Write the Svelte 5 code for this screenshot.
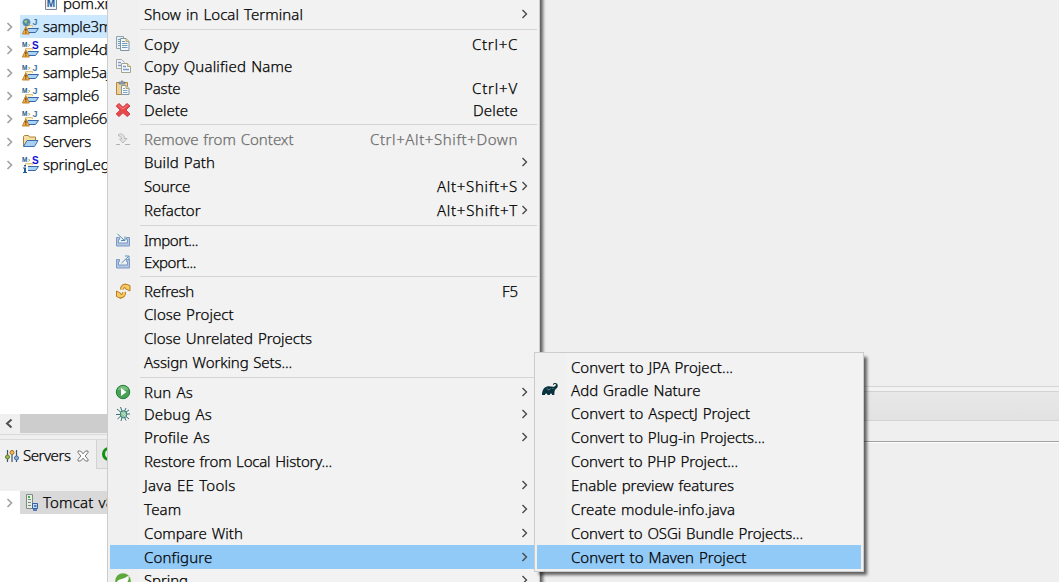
<script lang="ts">
  const projects = [
    { name: 'sample3mybatis', width: 107, icon: 'web', mark: 'J', selected: true },
    { name: 'sample4db', width: 73, icon: 'maven', mark: 'S' },
    { name: 'sample5ajax', width: 82, icon: 'maven', mark: 'J' },
    { name: 'sample6', width: 56, icon: 'maven', mark: 'J' },
    { name: 'sample66', width: 64, icon: 'maven', mark: 'J' },
    { name: 'Servers', width: 48, icon: 'folder' },
    { name: 'springLegacy', width: 88, icon: 'info', mark: 'S' }
  ];

  // width = width of the label, keyWidth = width of the shortcut
  const menu = [
    { label: 'Show in Local Terminal', width: 159, sub: true },
    { sep: true },
    { label: 'Copy', width: 35.5, icon: 'copy', key: 'Ctrl+C', keyWidth: 46 },
    { label: 'Copy Qualified Name', width: 148.5, icon: 'copyName' },
    { label: 'Paste', width: 36.5, icon: 'paste', key: 'Ctrl+V', keyWidth: 46 },
    { label: 'Delete', width: 44, icon: 'delete', key: 'Delete', keyWidth: 45 },
    { sep: true },
    { label: 'Remove from Context', width: 149.5, icon: 'remove', key: 'Ctrl+Alt+Shift+Down', keyWidth: 148, disabled: true },
    { label: 'Build Path', width: 71, sub: true },
    { label: 'Source', width: 46, key: 'Alt+Shift+S', keyWidth: 81, sub: true },
    { label: 'Refactor', width: 56.5, key: 'Alt+Shift+T', keyWidth: 81, sub: true },
    { sep: true },
    { label: 'Import...', width: 54, icon: 'import' },
    { label: 'Export...', width: 52, icon: 'export' },
    { sep: true },
    { label: 'Refresh', width: 50, icon: 'refresh', key: 'F5', keyWidth: 16 },
    { label: 'Close Project', width: 89.5 },
    { label: 'Close Unrelated Projects', width: 168 },
    { label: 'Assign Working Sets...', width: 148 },
    { sep: true },
    { label: 'Run As', width: 49, icon: 'run', sub: true },
    { label: 'Debug As', width: 68, icon: 'debug', sub: true },
    { label: 'Profile As', width: 66, sub: true },
    { label: 'Restore from Local History...', width: 188 },
    { label: 'Java EE Tools', width: 91.5, sub: true },
    { label: 'Team', width: 37.5, sub: true },
    { label: 'Compare With', width: 99, sub: true },
    { label: 'Configure', width: 68.5, sub: true, active: true },
    { label: 'Spring', width: 44, icon: 'spring', sub: true }
  ];

  const submenu = [
    { label: 'Convert to JPA Project...', width: 162 },
    { label: 'Add Gradle Nature', width: 129.5, icon: 'gradle' },
    { label: 'Convert to AspectJ Project', width: 179 },
    { label: 'Convert to Plug-in Projects...', width: 194 },
    { label: 'Convert to PHP Project...', width: 167 },
    { label: 'Enable preview features', width: 163 },
    { label: 'Create module-info.java', width: 164 },
    { label: 'Convert to OSGi Bundle Projects...', width: 232 },
    { label: 'Convert to Maven Project', width: 175.5, active: true }
  ];

  // spread the letters so the text takes exactly the given width
  function fit(el: HTMLElement, width: number) {
    const natural = el.getBoundingClientRect().width;
    el.style.letterSpacing = (width - natural) / el.textContent.length + 'px';
  }
</script>

{#snippet arrow()}
  <svg class="arrow" width="8" height="10" viewBox="0 0 8 10"><path d="M1.500 1 5.500 5 1.500 9" /></svg>
{/snippet}

{#snippet projectIcon(item)}
  <svg width="17" height="17" viewBox="0 0 17 17">
    {#if item.icon === 'folder'}
      <path d="M1.500 13V3.500l1-1h4l1 1.500h6v3" fill="#f8dfa0" stroke="#a9843c" />
      <path d="M1.500 13.500 5 7.500h11l-3.500 6z" fill="#a9d0f2" stroke="#3d6fae" />
    {:else}
      <path d="M3.500 12V7.500h7V9" fill="#fdeebf" stroke="#e0c27e" />
      <path d="M3.500 14.500 6 10.500h10.500l-3 4z" fill="#a9d4f7" stroke="#3566a8" />
      {#if item.icon === 'web'}
        <circle cx="4.500" cy="4.500" r="3.700" fill="#4f86a9" stroke="#7397ad" stroke-width=".6" />
        <path d="M2 3.500 4 2l1.500 1L4 6zM5.500 6l2-1-.5 2z" fill="#a3cf7c" />
      {:else}
        <text x="0" y="6" font-size="6.500" font-weight="bold" fill="#1d5d8d">M</text>
        <path d="M6.500 3l1.200 1.200L6.500 5.500" fill="none" stroke="#b78a34" />
      {/if}
      {#if item.mark === 'S'}
        <text x="10" y="8" font-size="10" font-weight="bold" fill="#1010d8">S</text>
      {:else}
        <text x="10.500" y="7" font-size="9" font-weight="bold" fill="#3f79ab">J</text>
      {/if}
      {#if item.icon === 'info'}
        <path d="M1 9h5v8H1z" fill="#fff" />
        <path d="M2 9h2v1.500H2zM1 11.500h3V16h1v1H1v-1h1v-3.500H1z" fill="#235e92" />
      {:else}
        <path d="M3.800 8.800 7.300 16H.4z" fill="#f2b24a" stroke="#c4822a" stroke-linejoin="round" />
        <path d="M3.300 10.800h1.100v2.600H3.300zM3.300 14.200h1.100v1H3.300z" fill="#5c3500" />
      {/if}
    {/if}
  </svg>
{/snippet}

{#snippet menuIcon(name)}
  <svg width="16" height="16" viewBox="0 0 16 16">
    {#if name === 'copy'}
      <path d="M1.500.5h7v12h-7z" fill="#e9f0f5" stroke="#8fa3ad" />
      <path d="M3 3.500h2M3 5.500h2M3 7.500h2M3 9.500h2" stroke="#799bb7" />
      <path d="M5.500 2.500h5.500l3 3v9H5.500z" fill="#f3f8fb" stroke="#7d94a1" />
      <path d="M11 2.500v3h3" fill="#e8d6a0" stroke="#b7a570" />
      <path d="M7 5.500h3M7 7.500h5.500M7 9.500h5.500M7 11.500h5.500" stroke="#7399b9" />
    {:else if name === 'copyName'}
      <path d="M1.500 1.500h5l3 3v6h-8z" fill="#f5f8fb" stroke="#a5a9a3" />
      <path d="M3 4.500h3M3 7.500h4" stroke="#7c9bce" stroke-width="1.500" />
      <path d="M6.500 5.500h6l3 3v6h-9z" fill="#f5f8fb" stroke="#a5a38c" />
      <path d="M12.500 5.500v3h3" fill="#eddca4" stroke="#b7a570" />
      <path d="M8 8.500h3M8 11.500h6" stroke="#7c9bce" stroke-width="1.500" />
    {:else if name === 'paste'}
      <path d="M1.500 2.500h11v12h-11z" fill="#f0d097" stroke="#b18743" />
      <path d="M4 4V2h2l1-1.500L8 2h2v2z" fill="#8d9faf" stroke="#65798a" stroke-width=".7" />
      <path d="M6.500 5.500h4.500l3 3v6H6.500z" fill="#f4f8fb" stroke="#8398a7" />
      <path d="M11 5.500v3h3" fill="#e8d6a0" stroke="#b7a570" />
      <path d="M8 8.500h2M8 10.500h4.500M8 12.500h4.500" stroke="#84a8c4" />
    {:else if name === 'delete'}
      <path d="M4 1.500 8 5.300l4-3.800 3 2.500L11 8l4 4-2.700 2.500L8 10.800l-4 3.700L1.200 12l4-4-4-4z" fill="#e9484a" stroke="#cf3f44" stroke-linejoin="round" />
      <path d="M3.500 3.500 8 7l4.500-3.500" fill="none" stroke="#f58984" />
    {:else if name === 'remove'}
      <path d="M1 13.500h4M10 13.500h5" stroke="#b1b1b1" />
      <path d="M3.500 3.500c3-1.500 6 0 6 4h2.500L8 12 4.500 8h2c0-2-1-3-3-3z" fill="#e2e2e2" stroke="#adadad" stroke-width=".8" />
    {:else if name === 'import' || name === 'export'}
      <path d="M1.500 5.500h3v2h-1V11h9V7.500h-1v-2h3v8.500h-13z" fill="#b3c7e4" stroke="#7d98c2" />
      {#if name === 'import'}
        <path d="M2.500 2l7 6.500M10 4.500v4H6" fill="none" stroke="#4a8db3" />
      {:else}
        <path d="M6.500 9 13.500 2.500M10 2h4v4" fill="none" stroke="#5595b7" />
      {/if}
    {:else if name === 'refresh'}
      <path d="M7 6.500C7 3.500 9 2 11.500 3" fill="none" stroke="#b97d20" stroke-width="4" />
      <path d="M10 1l5 1.500v5.500l-5-2.500z" fill="#f8ca66" stroke="#b97d20" stroke-linejoin="round" />
      <path d="M7 6.500C7 3.500 9 2 12 3.500" fill="none" stroke="#f8ca66" stroke-width="2.200" />
      <path d="M9 9c.3 3-1.500 5-4.500 4" fill="none" stroke="#b97d20" stroke-width="4" />
      <path d="M1.500 8 6 10.500v5l-4.500-2z" fill="#f8ca66" stroke="#b97d20" stroke-linejoin="round" />
      <path d="M9 9c.3 3-1.500 5-5 3.500" fill="none" stroke="#f8ca66" stroke-width="2.200" />
    {:else if name === 'run'}
      <circle cx="8" cy="8" r="6.700" fill="#48a355" stroke="#237b3b" />
      <path d="M3 6a5 4 0 0 1 10 0" fill="#79bd7d" />
      <path d="M6 4v8l5.500-4z" fill="#fff" />
    {:else if name === 'debug'}
      <path d="M8 8 5.500 1M8 8l3-6M8 8 2 3M8 8l6-4M8 8.500H1M8 8h7M8 8l-5.500 5M8 8l6 5M8 8l-2 7M8 8l3 6.500" stroke="#39727a" />
      <ellipse cx="8.500" cy="8.300" rx="3.300" ry="3.600" fill="#8fc3a5" stroke="#3d7d7b" />
      <path d="M6.500 6.500l4 4M8.500 6l2 2.500" stroke="#cbe6bd" />
    {:else if name === 'spring'}
      <circle cx="8" cy="9" r="7.800" fill="#5fa83c" />
      <path d="M2 11c0-5 7-3 11.500-7.500C15 11 9 14 4.500 13z" fill="#fff" />
    {:else if name === 'gradle'}
      <path d="M0 13C0 8 2 5.500 5 4.500c3-1 5.500.8 7.500 0 2-1 1.800-2.500.5-2.500-.8 0-1 .6-1.300 1l-.8-.6C11.500 1 13 .700 14.300 1.300c2 1 2 4-.3 5.500-1.500 1-1.500 3.200-1.700 6.200H10c0-2-2-2-2.200 0H5.500c-.2-2-2.300-2-2.500 0z" fill="#07333f" />
      <path d="M5 6.500c1.500 2 2.500 1.500 3.500 0M10.500 6.500h1" fill="none" stroke="#adc0c4" stroke-width=".7" />
    {/if}
  </svg>
{/snippet}

{#snippet menuItems(items)}
  {#each items as item}
    {#if item.sep}
      <div class="sep"></div>
    {:else}
      <div class="item" class:small={item.icon} class:active={item.active} class:disabled={item.disabled}>
        <span class="icon">
          {#if item.icon}{@render menuIcon(item.icon)}{/if}
        </span>
        <span class="label"><span class="text" use:fit={item.width}>{item.label}</span></span>
        {#if item.key}<span class="text" use:fit={item.keyWidth}>{item.key}</span>{/if}
        <span class="more">
          {#if item.sub}{@render arrow()}{/if}
        </span>
      </div>
    {/if}
  {/each}
{/snippet}

<div class="window">
  <div class="left">
    <div class="tree">
      <div class="row file">
        <svg width="12" height="13" viewBox="0 0 12 13">
          <path d="M.5.5h11v12H.5z" fill="#edf3f8" stroke="#7a8792" />
          <text x="1.800" y="10" font-size="10" font-weight="bold" fill="#1d5d9d">M</text>
        </svg>
        <span class="text name" use:fit={58}>pom.xml</span>
      </div>
      {#each projects as project}
        <div class="row">
          <span class="twist">{@render arrow()}</span>
          <div class="node" class:selected={project.selected}>
            {@render projectIcon(project)}
            <span class="text name" use:fit={project.width}>{project.name}</span>
          </div>
        </div>
      {/each}
    </div>
    <div class="scrollbar">
      <svg width="20" height="19" viewBox="0 0 20 19"><path d="M11.500 5.500 7 9.500l4.500 4" fill="none" stroke="#505050" stroke-width="2" /></svg>
      <div class="thumb"></div>
    </div>
    <div class="gap"></div>
    <div class="tabs">
      <div class="tab current">
        <svg width="14" height="14" viewBox="0 0 14 14">
          <path d="M2.500 1v12M7 1v12M11.500 1v12" stroke="#3c5270" stroke-width="1.200" />
          <circle cx="2.500" cy="8" r="2" fill="#9dbb55" stroke="#5e7b2c" />
          <circle cx="7" cy="3.500" r="2" fill="#f3bd55" stroke="#a66f19" />
          <circle cx="11.500" cy="9" r="2" fill="#8eb2df" stroke="#426a9c" />
        </svg>
        <span class="text name" use:fit={47.5}>Servers</span>
        <svg class="close" width="12" height="12" viewBox="0 0 12 12">
          <path d="M1 1h2.500L6 3.800 8.500 1H11v1.500L8.200 6 11 9.500V11H8.500L6 8.200 3.500 11H1V9.500L3.800 6 1 2.500z" fill="#fff" stroke="#666" stroke-width=".9" />
        </svg>
      </div>
      <div class="tab">
        <svg width="16" height="16" viewBox="0 0 16 16"><circle cx="8" cy="8" r="5.500" fill="none" stroke="#12930f" stroke-width="3" /><path d="M8 4v5" stroke="#12930f" stroke-width="2" /></svg>
      </div>
    </div>
    <div class="toolbar"></div>
    <div class="servers">
      <div class="row">
        <span class="twist">{@render arrow()}</span>
        <div class="node server">
          <svg width="17" height="17" viewBox="0 0 17 17">
            <path d="M1.500.5h6v14h-6z" fill="#e9eee4" stroke="#7d8c83" />
            <path d="M3 5.500h3M3 8.500h3M3 11.500h3" stroke="#788b7f" />
            <path d="M3 2h2v2H3z" fill="#3cb43c" />
            <path d="M7.500 9.500h5v5h-5z" fill="#c5dcf6" stroke="#345fa6" />
            <path d="M9 12h2.500M8 16h4" stroke="#345fa6" stroke-width="1.300" />
          </svg>
          <span class="text name" use:fit={84}>Tomcat v8.5</span>
        </div>
      </div>
    </div>
  </div>

  <div class="right">
    <div class="editor"></div>
    <div class="sash"></div>
    <div class="bar"></div>
    <div class="strip"></div>
    <div class="panel"></div>
  </div>

  <div class="menu main">{@render menuItems(menu)}</div>
  <div class="menu nested">{@render menuItems(submenu)}</div>
</div>

<style>
  :global(body) {
    margin: 0;
    overflow: hidden;
  }

  .window {
    position: relative;
    display: flex;
    width: 1059px;
    height: 582px;
    overflow: hidden;
    background: #efefef;
    color: #000;
    font: 300 15px/20px 'Noto Sans', 'Noto Sans CJK KR', sans-serif;
  }

  svg {
    display: block;
    flex: none;
  }

  svg text {
    font-family: 'Liberation Sans', sans-serif;
  }

  .text {
    white-space: pre;
    word-spacing: 1px;
    -webkit-text-stroke: 0.25px currentColor;
  }

  .arrow path {
    fill: none;
    stroke: #444;
    stroke-width: 1.3;
  }

  /* left side */
  .left {
    display: flex;
    flex: none;
    flex-direction: column;
    width: 107px;
    overflow: hidden;
  }

  .name {
    margin-top: -2px;
  }

  .tree {
    height: 414px;
    overflow: hidden;
    background: #fff;
  }

  .row {
    display: flex;
    height: 23px;
  }

  .file {
    align-items: center;
    gap: 6px;
    margin-top: -8px;
    padding-left: 45px;
  }

  .twist {
    display: flex;
    flex: none;
    align-items: center;
    width: 14px;
    padding-left: 6px;
  }

  .twist .arrow path {
    stroke: #a0a0a0;
    stroke-width: 1.6;
  }

  .node {
    display: flex;
    flex: 1;
    align-items: center;
    gap: 4px;
    min-width: 0;
    padding-left: 2px;
  }

  .selected {
    background: #cce8ff;
  }

  .server {
    gap: 1px;
    padding-left: 5px;
    background: #d9d9d9;
  }

  .scrollbar {
    display: flex;
    height: 19px;
    background: #f0f0f0;
  }

  .thumb {
    flex: 1;
    background: #cdcdcd;
  }

  .gap {
    height: 4px;
    margin-top: 1px;
    border-top: 1px solid #d9d9d9;
  }

  .tabs {
    display: flex;
    height: 30px;
    border-top: 1px solid #dadada;
    box-sizing: border-box;
  }

  .tab {
    display: flex;
    flex: 1;
    align-items: center;
    min-width: 0;
    padding-left: 4px;
    border-bottom: 1px solid #d2d2d2;
    border-left: 1px solid #d2d2d2;
    background: #e7e7e7;
  }

  .current {
    flex: none;
    box-sizing: border-box;
    width: 96px;
    padding-left: 5px;
    padding-top: 2px;
    border: 0;
    background: #f0f0f0;
  }

  .current .name {
    margin-left: 4px;
  }

  .close {
    margin-left: 6px;
  }

  .toolbar {
    height: 22px;
    background: #f0f0f0;
  }

  .servers {
    flex: 1;
    background: #fff;
  }

  /* right side */
  .right {
    display: flex;
    flex: 1;
    flex-direction: column;
  }

  .editor {
    height: 386px;
  }

  .sash {
    height: 4px;
    border-top: 1px solid #d6d6d6;
    background: #f2f2f2;
  }

  .bar {
    height: 28px;
    border-top: 1px solid #d3d3d3;
    border-bottom: 1px solid #d3d3d3;
    background: linear-gradient(#e8e8e8, #e2e2e2);
  }

  .strip {
    height: 20px;
  }

  .panel {
    flex: 1;
    border-top: 1px solid #a0a0a0;
    box-shadow: inset 0 1px #fff;
  }

  /* popup menus */
  .menu {
    position: absolute;
    box-sizing: border-box;
    padding: 2px;
    border: 1px solid #ccc;
    background: linear-gradient(to right, #f0f0f0 31px, #f2f2f2 31px);
    box-shadow: 4px 4px 3px -1px rgba(0, 0, 0, 0.6);
  }

  .main {
    top: -21px;
    left: 107px;
    width: 433px;
    padding-top: 22px;
  }

  .nested {
    top: 352px;
    left: 534px;
    width: 330px;
  }

  .item {
    display: flex;
    align-items: center;
    height: 24px;
  }

  .small {
    height: 22px;
  }

  .active {
    background: #91c9f7;
  }

  .disabled {
    color: #6d6d6d;
  }

  .icon {
    width: 29px;
    padding-left: 5px;
  }

  .label {
    flex: 1;
  }

  .more {
    width: 19px;
    padding-left: 3px;
    box-sizing: border-box;
  }

  .sep {
    height: 1px;
    margin: 3px 0 3px 30px;
    background: #d5d5d5;
  }
</style>
